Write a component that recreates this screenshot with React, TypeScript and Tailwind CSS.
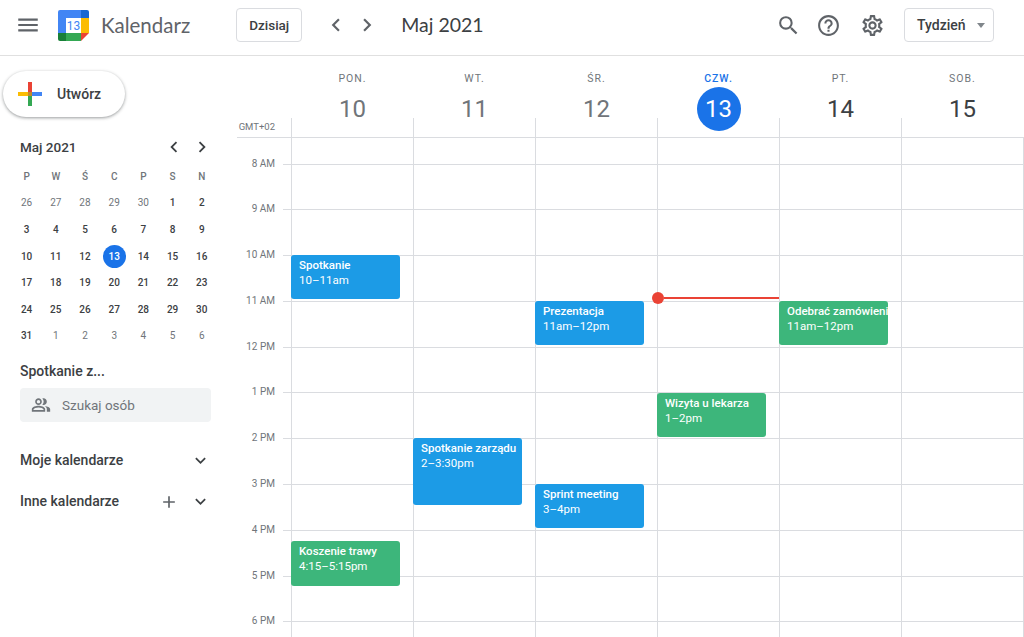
import React from 'react';
import {
  MdMenu,
  MdSearch,
  MdHelpOutline,
  MdOutlineSettings,
  MdChevronLeft,
  MdChevronRight,
  MdExpandMore,
  MdAdd,
  MdOutlinePeopleAlt,
} from 'react-icons/md';

const HOUR = 45.8;
const FIRST_HOUR = 8;
const hours = ['8 AM', '9 AM', '10 AM', '11 AM', '12 PM', '1 PM', '2 PM', '3 PM', '4 PM', '5 PM', '6 PM'];

const days = [
  { name: 'PON.', num: 10, muted: true },
  { name: 'WT.', num: 11, muted: true },
  { name: 'ŚR.', num: 12, muted: true },
  { name: 'CZW.', num: 13, today: true },
  { name: 'PT.', num: 14 },
  { name: 'SOB.', num: 15 },
];

type CalEvent = { day: number; title: string; time: string; start: number; end: number; green?: boolean };

const events: CalEvent[] = [
  { day: 0, title: 'Spotkanie', time: '10–11am', start: 10, end: 11 },
  { day: 2, title: 'Prezentacja', time: '11am–12pm', start: 11, end: 12 },
  { day: 4, title: 'Odebrać zamówienie', time: '11am–12pm', start: 11, end: 12, green: true },
  { day: 3, title: 'Wizyta u lekarza', time: '1–2pm', start: 13, end: 14, green: true },
  { day: 1, title: 'Spotkanie zarządu', time: '2–3:30pm', start: 14, end: 15.5 },
  { day: 2, title: 'Sprint meeting', time: '3–4pm', start: 15, end: 16 },
  { day: 0, title: 'Koszenie trawy', time: '4:15–5:15pm', start: 16.25, end: 17.25, green: true },
];

const miniWeeks = [
  [26, 27, 28, 29, 30, 1, 2],
  [3, 4, 5, 6, 7, 8, 9],
  [10, 11, 12, 13, 14, 15, 16],
  [17, 18, 19, 20, 21, 22, 23],
  [24, 25, 26, 27, 28, 29, 30],
  [31, 1, 2, 3, 4, 5, 6],
];

const Logo = () => (
  <svg width="31" height="31" viewBox="0 0 31 31">
    <path d="M2 0h21v8H8v15H0V2a2 2 0 0 1 2-2z" fill="#4285f4" />
    <path d="M23 0h6a2 2 0 0 1 2 2v6h-8z" fill="#1967d2" />
    <rect x="23" y="8" width="8" height="15" fill="#fbbc04" />
    <rect x="8" y="23" width="15" height="8" fill="#34a853" />
    <path d="M0 23h8v8H2a2 2 0 0 1-2-2z" fill="#188038" />
    <path d="M23 23h8l-8 8z" fill="#ea4335" />
    <rect x="8" y="8" width="15" height="15" fill="#fff" />
    <text x="15.5" y="20" textAnchor="middle" fontSize="12" fill="#4285f4" fontFamily="Roboto, sans-serif">13</text>
  </svg>
);

const PlusLogo = () => (
  <svg width="24" height="24" viewBox="0 0 24 24">
    <rect x="10" y="0" width="4" height="10" fill="#ea4335" />
    <rect x="14" y="10" width="10" height="4" fill="#4285f4" />
    <rect x="10" y="14" width="4" height="10" fill="#34a853" />
    <rect x="0" y="10" width="10" height="4" fill="#fbbc04" />
    <rect x="10" y="10" width="4" height="4" fill="#c0892c" />
  </svg>
);

const Header = () => (
  <header className="flex h-14 shrink-0 items-center border-b border-[#e0e0e0] pb-[5px]">
    <MdMenu className="ml-[15px] text-[#5f6368]" size={26} />
    <div className="ml-[17px]">
      <Logo />
    </div>
    <span className="ml-3 text-[20.5px] text-[#5f6368]" style={{ fontFamily: 'Lato, sans-serif' }}>Kalendarz</span>
    <button className="ml-[46px] h-[34px] w-[66px] rounded border border-[#dadce0] text-[13.5px] font-medium text-[#3c4043]">
      Dzisiaj
    </button>
    <MdChevronLeft className="ml-[21px] text-[#5f6368]" size={26} />
    <MdChevronRight className="ml-[5px] text-[#5f6368]" size={26} />
    <span className="ml-[21px] text-[19.5px] text-[#3c4043]" style={{ fontFamily: 'Lato, sans-serif' }}>Maj 2021</span>
    <div className="ml-auto flex items-center">
      <MdSearch className="text-[#5f6368]" size={25} />
      <MdHelpOutline className="ml-[15px] text-[#5f6368]" size={25} />
      <MdOutlineSettings className="ml-[19px] text-[#5f6368]" size={25} />
      <button className="ml-[19px] mr-[30px] flex h-[34px] w-[90px] items-center rounded border border-[#dadce0] pl-3 text-[14px] font-medium text-[#3c4043]">
        Tydzień
        <span className="ml-[11px] h-0 w-0 border-x-4 border-t-[5px] border-x-transparent border-t-[#80868b]" />
      </button>
    </div>
  </header>
);

const MiniCalendar = () => (
  <div className="mt-[15px] pl-[12px]">
    <div className="flex h-[30px] items-center">
      <span className="ml-[8px] text-[13.5px] font-medium text-[#3c4043]">Maj 2021</span>
      <MdChevronLeft className="ml-auto text-[#3c4043]" size={22} />
      <MdChevronRight className="mr-[24px] ml-[6px] text-[#3c4043]" size={22} />
    </div>
    <div className="mt-[1px] grid w-[204.4px] grid-cols-7 text-center text-[10px] font-medium text-[#70757a]">
      {['P', 'W', 'Ś', 'C', 'P', 'S', 'N'].map((d, i) => (
        <div key={i} className="flex h-[26.6px] items-center justify-center">{d}</div>
      ))}
    </div>
    {miniWeeks.map((week, w) => (
      <div key={w} className="grid w-[204.4px] grid-cols-7 text-center text-[10px]">
        {week.map((d, i) => {
          const other = (w === 0 && d > 20) || (w === 5 && d < 20);
          const today = d === 13;
          return (
            <div key={i} className="flex h-[26.6px] items-center justify-center">
              {today ? (
                <span className="flex h-[23px] w-[23px] items-center justify-center rounded-full bg-[#1a73e8] font-medium text-white">{d}</span>
              ) : (
                <span className={other ? 'text-[#70757a]' : 'font-medium text-[#3c4043]'}>{d}</span>
              )}
            </div>
          );
        })}
      </div>
    ))}
  </div>
);

const Sidebar = () => (
  <aside className="w-[237px] shrink-0">
    <button className="mt-[15px] ml-[3px] flex h-[46px] w-[122px] items-center rounded-full bg-white pl-[15px] shadow-[0_1px_3px_1px_rgba(60,64,67,0.2),0_1px_2px_rgba(60,64,67,0.25)]">
      <PlusLogo />
      <span className="ml-[15px] text-[14px] font-medium text-[#3c4043]">Utwórz</span>
    </button>
    <MiniCalendar />
    <div className="mt-[11.5px] pl-5 text-[14px] font-medium text-[#3c4043]">Spotkanie z...</div>
    <div className="mt-[6px] ml-5 flex h-[34px] w-[191px] items-center rounded bg-[#f1f3f4] pl-[11px] text-[13.5px] text-[#70757a]">
      <MdOutlinePeopleAlt size={20} />
      <span className="ml-[11px]">Szukaj osób</span>
    </div>
    <div className="mt-[28px] flex h-[22px] items-center pl-5 text-[14px] font-medium text-[#3c4043]">
      Moje kalendarze
      <MdExpandMore className="ml-auto mr-[26px]" size={21} />
    </div>
    <div className="mt-[19px] flex h-[22px] items-center pl-5 text-[14px] font-medium text-[#3c4043]">
      Inne kalendarze
      <MdAdd className="ml-auto text-[#5f6368]" size={20} />
      <MdExpandMore className="mr-[26px] ml-[11px]" size={21} />
    </div>
  </aside>
);

const DayHeader = () => (
  <div className="flex h-[82px] shrink-0 border-b border-[#dadce0]">
    <div className="flex w-[54px] shrink-0 items-end justify-end pr-[16px] pb-[3px] text-[9.5px] whitespace-nowrap text-[#70757a]">GMT+02</div>
    {days.map((d) => (
      <div key={d.num} className="relative w-[122px] shrink-0 pt-[17px] pl-px text-center">
        <span className="absolute bottom-0 left-0 h-[19px] w-px bg-[#dadce0]" />
        <div className={`text-[10.5px] leading-[12px] tracking-[1px] ${d.today ? 'font-medium text-[#1a73e8]' : 'text-[#70757a]'}`}>
          {d.name}
        </div>
        <div className="mt-[2px] flex justify-center">
          <span
            className={`flex h-[44px] w-[44px] items-center justify-center rounded-full text-[24px] ${
              d.today ? 'bg-[#1a73e8] text-white' : d.muted ? 'text-[#70757a]' : 'text-[#3c4043]'
            }`}
          >
            {d.num}
          </span>
        </div>
      </div>
    ))}
  </div>
);

const EventCard = ({ ev }: { ev: CalEvent }) => (
  <div
    className={`absolute -left-px w-[109px] overflow-hidden whitespace-nowrap rounded-[3px] pt-[3px] pl-[8px] text-[11.5px] leading-[15px] text-white ${
      ev.green ? 'bg-[#3db67b]' : 'bg-[#1c9be6]'
    }`}
    style={{
      top: (ev.start - FIRST_HOUR) * HOUR + 25.5,
      height: (ev.end - ev.start) * HOUR - 1.5,
    }}
  >
    <div className="font-medium">{ev.title}</div>
    <div>{ev.time}</div>
  </div>
);

const Grid = () => (
  <div className="flex flex-1 overflow-hidden">
    <div className="w-[54px] shrink-0 pt-[25.5px]">
      {hours.map((h) => (
        <div key={h} className="relative h-[45.8px]">
          <span className="absolute top-[-7px] right-[16px] text-[10px] leading-[14px] text-[#70757a]">{h}</span>
          <span className="absolute top-0 right-0 h-px w-2 bg-[#dadce0]" />
        </div>
      ))}
    </div>
    {days.map((d, i) => (
      <div key={d.num} className="relative w-[122px] shrink-0 border-l border-[#dadce0] pt-[25.5px]">
        {hours.map((h) => (
          <div key={h} className="h-[45.8px] border-t border-[#dadce0]" />
        ))}
        {events.filter((ev) => ev.day === i).map((ev) => (
          <EventCard key={ev.title} ev={ev} />
        ))}
        {d.today && (
          <div className="absolute top-[154px] left-0 flex w-full items-center">
            <span className="-ml-[6px] h-3 w-3 shrink-0 rounded-full bg-[#ea4335]" />
            <span className="h-[2px] flex-1 bg-[#ea4335]" />
          </div>
        )}
      </div>
    ))}
    <div className="w-px shrink-0 bg-[#dadce0]" />
  </div>
);

export default function App() {
  return (
    <div className="flex h-[637px] w-[1024px] flex-col overflow-hidden bg-white" style={{ fontFamily: 'Roboto, sans-serif' }}>
      <Header />
      <div className="flex min-h-0 flex-1">
        <Sidebar />
        <main className="flex min-w-0 flex-1 flex-col">
          <DayHeader />
          <Grid />
        </main>
      </div>
    </div>
  );
}
